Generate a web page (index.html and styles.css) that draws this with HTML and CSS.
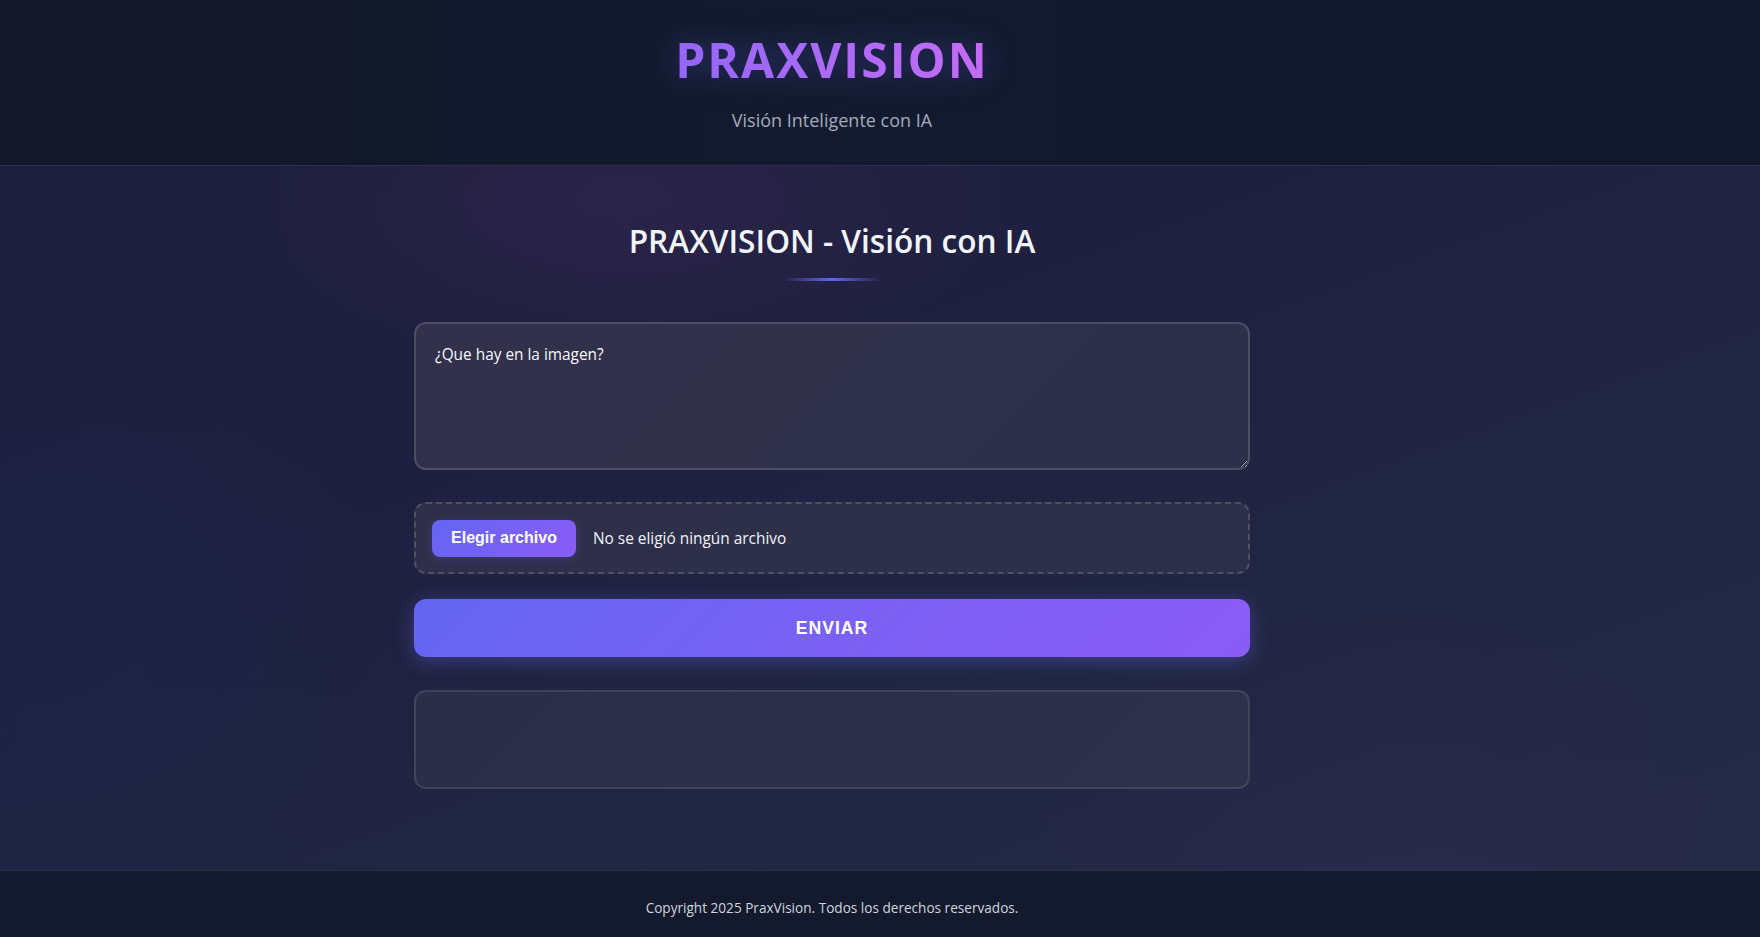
FILE: index.html
```html
<!DOCTYPE html>
<html lang="es">
<head>
<meta charset="utf-8">
<title>PRAXVISION</title>
<link rel="stylesheet" href="styles.css">
</head>
<body>
<header class="site-header">
  <h1 class="brand">PRAXVISION</h1>
  <p class="tagline">Visión Inteligente con IA</p>
</header>
<main class="site-main">
  <section class="panel">
    <h2 class="panel-title">PRAXVISION - Visión con IA</h2>
    <div class="title-line"></div>
    <form class="vision-form">
      <textarea class="prompt">¿Que hay en la imagen?</textarea>
      <div class="file-box">
        <span class="file-btn">Elegir archivo</span>
        <span class="file-name">No se eligió ningún archivo</span>
      </div>
      <button type="button" class="send-btn">ENVIAR</button>
      <div class="result"></div>
    </form>
  </section>
</main>
<footer class="site-footer">
  <p>Copyright 2025 PraxVision. Todos los derechos reservados.</p>
</footer>
</body>
</html>
```

FILE: styles.css
```css
* { box-sizing: border-box; }
html, body { height: 100%; }
body {
  margin: 0;
  font-family: "Open Sans", "Noto Sans", "Liberation Sans", sans-serif;
  color: #f1f5f9;
  background: #1e2140;
  display: flex;
  flex-direction: column;
  min-height: 937px;
  overflow: hidden;
}
.site-header {
  height: 166px;
  flex: none;
  background: linear-gradient(90deg, #121829 0%, #131a2f 50%, #12182b 100%);
  border-bottom: 1px solid #2a3148;
  display: flex;
  flex-direction: column;
  align-items: center;
  padding-right: 96px;
  padding-top: 30px;
}
.brand {
  margin: 0;
  font-size: 48px;
  line-height: 60px;
  font-weight: 700;
  letter-spacing: 2px;
  background: linear-gradient(90deg, #9466f7 0%, #ab6af7 50%, #c56bf6 100%);
  -webkit-background-clip: text;
  background-clip: text;
  color: transparent;
  filter: drop-shadow(0 0 14px rgba(99, 102, 241, 0.35));
}
.tagline {
  margin: 19px 0 0;
  font-size: 18px;
  line-height: 22px;
  color: #a3abbb;
}
.site-main {
  flex: 1;
  background:
    radial-gradient(ellipse 560px 260px at 620px 30px, rgba(110, 55, 130, 0.16), transparent 70%),
    radial-gradient(ellipse 500px 400px at 1380px 720px, rgba(110, 55, 130, 0.07), transparent 70%),
    radial-gradient(ellipse 500px 450px at 60px 480px, rgba(20, 40, 80, 0.35), transparent 70%),
    linear-gradient(160deg, #1d1f3d 0%, #1f2040 35%, #202541 60%, #242a47 100%);
  display: flex;
  justify-content: center;
  padding-right: 96px;
  padding-top: 53.5px;
}
.panel {
  width: 836px;
  display: flex;
  flex-direction: column;
  align-items: center;
}
.panel-title {
  margin: 0;
  font-size: 31.6px;
  line-height: 42px;
  font-weight: 600;
  color: #f1f5f9;
}
.title-line {
  width: 100px;
  height: 3px;
  margin-top: 16.5px;
  background: linear-gradient(90deg, transparent, #6366f1, transparent);
  border-radius: 2px;
}
.vision-form {
  width: 100%;
  margin-top: 41px;
  display: flex;
  flex-direction: column;
}
.prompt {
  width: 100%;
  height: 148px;
  padding: 20px 19px;
  border: 2px solid rgba(255, 255, 255, 0.14);
  border-radius: 12px;
  background: linear-gradient(135deg, #33304c 0%, #2f3049 50%, #2d3049 100%);
  color: #f8fafc;
  font-family: "Open Sans", "Noto Sans", sans-serif;
  font-size: 15.4px;
  line-height: 22px;
  resize: vertical;
  outline: none;
}
.file-box {
  margin-top: 32px;
  height: 72px;
  padding: 16px;
  border: 2px dashed rgba(255, 255, 255, 0.16);
  border-radius: 12px;
  background: linear-gradient(135deg, #302e49 0%, #2d3049 60%, #2b3048 100%);
  display: flex;
  align-items: center;
  gap: 17px;
}
.file-btn {
  height: 37px;
  width: 144px;
  display: flex;
  align-items: center;
  justify-content: center;
  border-radius: 8px;
  background: linear-gradient(135deg, #6366f1, #8b5cf6);
  color: #ffffff;
  font-family: "Liberation Sans", Arial, sans-serif;
  font-weight: 700;
  font-size: 16px;
  box-shadow: 0 2px 10px rgba(99, 102, 241, 0.25);
}
.file-name {
  font-size: 15.4px;
  color: #f1f5f9;
}
.send-btn {
  margin-top: 25px;
  height: 58px;
  width: 100%;
  border: none;
  border-radius: 12px;
  background: linear-gradient(135deg, #6366f1 0%, #7a61f3 50%, #8b5cf6 100%);
  color: #ffffff;
  font-family: "Liberation Sans", Arial, sans-serif;
  font-weight: 700;
  font-size: 17.6px;
  letter-spacing: 1px;
  box-shadow: 0 4px 20px rgba(99, 102, 241, 0.4);
}
.result {
  margin-top: 33px;
  height: 99px;
  border: 2px solid rgba(255, 255, 255, 0.1);
  border-radius: 12px;
  background: linear-gradient(135deg, #2a2e47 0%, #2b2f48 50%, #2d324b 100%);
}
.site-footer {
  height: 67px;
  flex: none;
  background: #131a2e;
  border-top: 1px solid #2a3148;
  display: flex;
  align-items: center;
  justify-content: center;
  padding-right: 96px;
  padding-top: 6px;
}
.site-footer p {
  margin: 0;
  font-size: 13.6px;
  color: #cfd5df;
}
```
